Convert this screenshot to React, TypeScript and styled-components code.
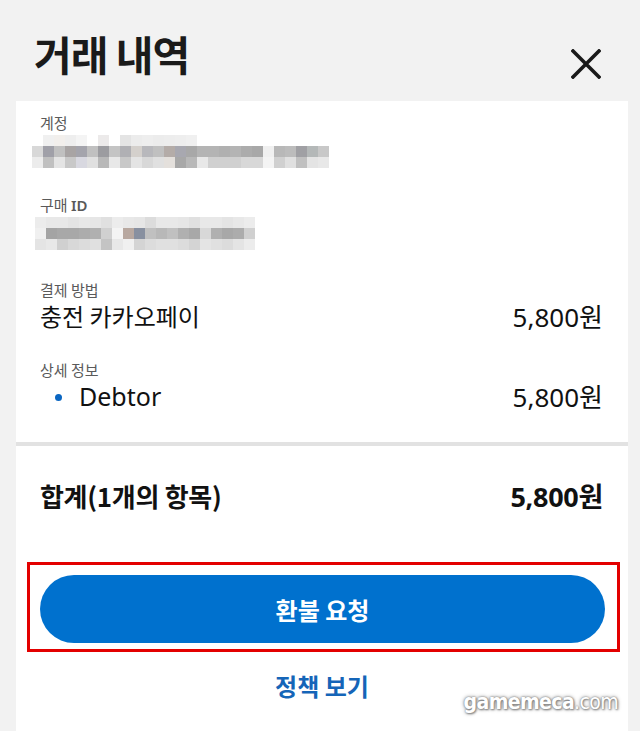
import styled, { createGlobalStyle } from 'styled-components'

const GlobalStyle = createGlobalStyle`
  html, body {
    margin: 0;
    padding: 0;
    background: #f2f2f2;
  }
  body {
    font-family: "Noto Sans", "Noto Sans CJK KR", sans-serif;
    color: #111;
  }
`

const KR = `"Noto Sans CJK KR", "Noto Sans", sans-serif`
const LATIN = `"Noto Sans", "Noto Sans CJK KR", sans-serif`

const Page = styled.div`
  position: relative;
  height: 731px;
  display: flex;
  flex-direction: column;
  overflow: hidden;
`

const Header = styled.header`
  height: 101px;
  display: flex;
  align-items: center;
  justify-content: space-between;
  padding: 0 38px 0 34px;
  box-sizing: border-box;
  flex-shrink: 0;
`

const Title = styled.h1`
  margin: 0;
  font-family: ${KR};
  font-size: 41px;
  font-weight: 700;
  line-height: 48px;
  letter-spacing: -1px;
  color: #1a1a1a;
  margin-top: 4px;
`

const CloseButton = styled.button`
  border: 0;
  background: none;
  padding: 0;
  width: 32px;
  height: 32px;
  margin-top: 26px;
  display: flex;
  align-items: center;
  justify-content: center;
  cursor: pointer;
`

const Panel = styled.main`
  flex: 1;
  margin: 0 12px 0 16px;
  background: #fff;
  display: flex;
  flex-direction: column;
`

const Details = styled.section`
  padding: 12px 25px 30px 24px;
  display: flex;
  flex-direction: column;
`

const Field = styled.div<{ $gap: number }>`
  margin-top: ${(p) => p.$gap}px;
  display: flex;
  flex-direction: column;
  &:first-child {
    margin-top: 0;
  }
`

const Label = styled.div`
  font-family: ${KR};
  font-size: 15px;
  line-height: 20px;
  color: #5a5a5a;

  b {
    font-family: ${LATIN};
    font-weight: 600;
  }
`

const Mosaic = styled.div<{ $cols: number; $shift: number }>`
  display: grid;
  grid-template-columns: repeat(${(p) => p.$cols}, 11px);
  grid-auto-rows: 11px;
  margin-left: ${(p) => p.$shift}px;
  margin-top: 2px;
`

const Cell = styled.span<{ $c: string }>`
  background: ${(p) => p.$c};
`

const ValueRow = styled.div`
  display: flex;
  justify-content: space-between;
  align-items: center;
  height: 32px;
  color: #111;
`

const KrValue = styled.span`
  font-family: ${KR};
  font-size: 24px;
  line-height: 32px;
`

const Amount = styled.span<{ $bold?: boolean }>`
  font-family: ${LATIN};
  font-size: ${(p) => (p.$bold ? 27 : 26)}px;
  line-height: 32px;
  font-weight: ${(p) => (p.$bold ? 700 : 400)};
  letter-spacing: ${(p) => (p.$bold ? '-0.3px' : '0')};

  span {
    font-family: ${KR};
  }
`

const Item = styled.span`
  display: flex;
  align-items: center;
  font-family: ${LATIN};
  font-size: 25px;
  line-height: 32px;
`

const Bullet = styled.i`
  width: 7px;
  height: 7px;
  border-radius: 50%;
  background: #0a66c2;
  margin: 2px 17px 0 15px;
`

const Divider = styled.hr`
  margin: 0;
  border: 0;
  height: 4px;
  background: #e2e2e2;
`

const Total = styled.div`
  display: flex;
  justify-content: space-between;
  align-items: center;
  padding: 34px 25px 0 24px;
  height: 32px;
`

const TotalLabel = styled.span`
  font-family: ${KR};
  font-size: 26px;
  font-weight: 700;
  line-height: 32px;
  letter-spacing: -0.3px;
`

const Highlight = styled.div`
  margin: 50px 8px 0 11px;
  border: 3px solid #e30000;
  padding: 10px 12px 6px 10px;
`

const PrimaryButton = styled.button`
  display: block;
  width: 100%;
  height: 68px;
  border: 0;
  border-radius: 34px;
  background: #0071ce;
  color: #fff;
  font-family: ${KR};
  font-size: 24px;
  font-weight: 700;
  cursor: pointer;
`

const PolicyLink = styled.a`
  margin-top: 19px;
  align-self: center;
  font-family: ${KR};
  font-size: 24px;
  font-weight: 700;
  line-height: 30px;
  color: #1565b8;
  text-decoration: none;
`

const Watermark = styled.div`
  position: absolute;
  right: 22px;
  bottom: 17px;
  font-family: "DejaVu Sans Condensed", "DejaVu Sans", sans-serif;
  font-stretch: condensed;
  font-size: 21px;
  font-weight: 700;
  letter-spacing: -0.6px;
  color: #fff;
  text-shadow: 0 0 2px #777, 0 0 4px #999, 1px 1px 2px #888;

  span {
    font-weight: 400;
  }
`

const accountRows = [
  ['#fff', '#f0f0f0', '#f2efec', '#eeeeee', '#f4f4f4', '#fff', '#eceaea', '#fff', '#e4e4e4', '#ececec', '#eeeeee', '#ececec', '#ededed', '#eeeeee', '#f0f0f0', '#fff', '#fff', '#fff', '#fff', '#fff', '#fff', '#fff', '#fff', '#fff', '#fff', '#fff', '#fff'],
  ['#d8d8d8', '#a0a0a8', '#c0c0c0', '#a8a4a4', '#a4a4ac', '#c0c0c0', '#9c9ca0', '#c4c4c4', '#b0b0b4', '#d4d0cc', '#b8b8bc', '#c0c0c0', '#b4aca8', '#a8a8b0', '#a8a8a8', '#b4b4b4', '#b4b4b4', '#b0b0b0', '#b4b4b4', '#acacac', '#a8a8a8', '#f0f0f0', '#b8b8b8', '#bcbcbc', '#a0a0a4', '#b4b8b8', '#c8c8c8'],
  ['#ececec', '#c0c0c0', '#e4e4e4', '#c8c8c8', '#d8d8e0', '#e0e0e0', '#b8b8b8', '#e8e8e8', '#c8c8c8', '#e4e4e4', '#d8d8d8', '#e0e0e0', '#e4e0dc', '#a8a8a8', '#b8b8b8', '#e8e8e8', '#d0d0d0', '#d0d0d0', '#d0d0d0', '#d8d8d8', '#d8d8d8', '#f4f4f4', '#d0d0d0', '#e0e0e0', '#c0c0c0', '#e4e4e4', '#e8e8e8'],
]

const purchaseRows = [
  ['#ececec', '#e8e8e8', '#e8e8e8', '#e4e4e4', '#e8e8e8', '#e6e6e6', '#e0e0e0', '#ececec', '#e8e8e8', '#e6e6e6', '#dcdcdc', '#e8e8e8', '#e8e8e8', '#e6e6e6', '#e0e0e0', '#e8e8e8', '#e8e8e8', '#e4e4e4', '#e8e8e8', '#ececec'],
  ['#f0f0f0', '#a4a4a4', '#a8a8a8', '#a8a8a8', '#acacac', '#b0b0b0', '#d0d0d0', '#f4f4f4', '#b8a8a0', '#8890a0', '#c0c0c0', '#b8b8b8', '#c0c0c0', '#b0b0b0', '#a8a8a8', '#d8d8d8', '#b0b0b0', '#a8a8a8', '#acacac', '#d0d0d0'],
  ['#e4e4e4', '#e8e8e8', '#d0d0d0', '#d8d8d8', '#dcdcdc', '#e0e0e0', '#c4c4c4', '#e8e8e8', '#f0f0f0', '#d4d4d4', '#dcdcdc', '#e0e0e0', '#e0e0e0', '#dcdcdc', '#d4d4d4', '#e4e4e4', '#e0e0e0', '#dcdcdc', '#e4e4e4', '#ececec'],
]

function Redacted({ rows, shift }: { rows: string[][]; shift: number }) {
  return (
    <Mosaic $cols={rows[0].length} $shift={shift}>
      {rows.flat().map((c, i) => (
        <Cell key={i} $c={c} />
      ))}
    </Mosaic>
  )
}

function Won({ value, bold }: { value: string; bold?: boolean }) {
  return (
    <Amount $bold={bold}>
      {value}
      <span>원</span>
    </Amount>
  )
}

export default function App() {
  return (
    <Page>
      <GlobalStyle />
      <Header>
        <Title>거래 내역</Title>
        <CloseButton aria-label="닫기">
          <svg width="30" height="30" viewBox="0 0 30 30">
            <path d="M2 2 L28 28 M28 2 L2 28" stroke="#1a1a1a" strokeWidth="3.6" strokeLinecap="square" />
          </svg>
        </CloseButton>
      </Header>

      <Panel>
        <Details>
          <Field $gap={0}>
            <Label>계정</Label>
            <Redacted rows={accountRows} shift={-8} />
          </Field>
          <Field $gap={27}>
            <Label>
              구매 <b>ID</b>
            </Label>
            <Redacted rows={purchaseRows} shift={-5} />
          </Field>
          <Field $gap={30}>
            <Label>결제 방법</Label>
            <ValueRow>
              <KrValue>충전 카카오페이</KrValue>
              <Won value="5,800" />
            </ValueRow>
          </Field>
          <Field $gap={28}>
            <Label>상세 정보</Label>
            <ValueRow>
              <Item>
                <Bullet />
                Debtor
              </Item>
              <Won value="5,800" />
            </ValueRow>
          </Field>
        </Details>

        <Divider />

        <Total>
          <TotalLabel>합계(1개의 항목)</TotalLabel>
          <Won value="5,800" bold />
        </Total>

        <Highlight>
          <PrimaryButton>환불 요청</PrimaryButton>
        </Highlight>

        <PolicyLink href="#">정책 보기</PolicyLink>
      </Panel>

      <Watermark>
        gamemeca<span>.com</span>
      </Watermark>
    </Page>
  )
}
